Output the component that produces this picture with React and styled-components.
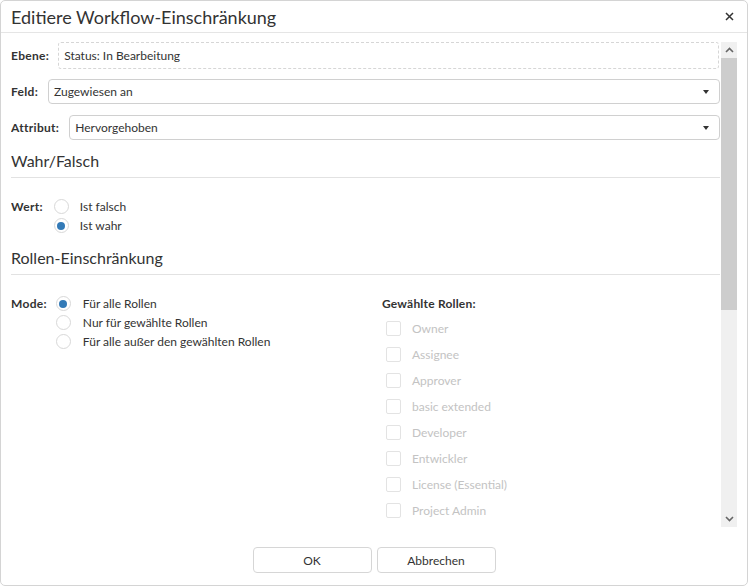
import styled, { createGlobalStyle } from 'styled-components'

const roles = [
  'Owner',
  'Assignee',
  'Approver',
  'basic extended',
  'Developer',
  'Entwickler',
  'License (Essential)',
  'Project Admin'
]

const GlobalStyle = createGlobalStyle`
  html, body {
    margin: 0;
    padding: 0;
    background: #fff;
  }
  body {
    font-family: 'Segoe UI', Lato, 'Open Sans', sans-serif;
    font-size: 12px;
    color: #333;
  }
  * { box-sizing: border-box; }
`

const Dialog = styled.div`
  width: 748px;
  height: 586px;
  border: 1px solid #d4d4d4;
  border-radius: 5px;
  display: flex;
  flex-direction: column;
  overflow: hidden;
`

const Header = styled.div`
  height: 32px;
  flex: none;
  border-bottom: 1px solid #e5e5e5;
  display: flex;
  align-items: center;
  justify-content: space-between;
  padding: 0 12px 0 10px;
`

const Title = styled.h1`
  margin: 0;
  font-size: 18px;
  font-weight: 400;
  color: #333;
`

const Close = styled.button`
  border: 0;
  background: none;
  padding: 0;
  width: 12px;
  height: 12px;
  display: flex;
  align-items: center;
  justify-content: center;
  cursor: pointer;
`

const Body = styled.div`
  flex: 1;
  display: flex;
  padding: 9px 10px 0 10px;
  min-height: 0;
`

const Content = styled.div`
  flex: 1;
  overflow: hidden;
  padding-right: 1px;
`

const FieldRow = styled.div`
  display: flex;
  align-items: center;
  gap: 10px;
  margin-bottom: ${p => p.$gap || 0}px;
`

const Label = styled.span`
  font-weight: 700;
  color: #333;
  letter-spacing: 0.3px;
  white-space: nowrap;
`

const StaticBox = styled.div`
  flex: 1;
  height: 27px;
  border: 1px dashed #d6d6d6;
  border-radius: 3px;
  display: flex;
  align-items: center;
  padding-left: 5px;
  margin-left: -1px;
  margin-right: 1px;
`

const Select = styled.div`
  flex: 1;
  height: 25px;
  border: 1px solid #d0d0d0;
  border-radius: 4px;
  display: flex;
  align-items: center;
  justify-content: space-between;
  padding: 0 10px 0 5px;
`

const Caret = styled.span`
  width: 0;
  height: 0;
  border-left: 3px solid transparent;
  border-right: 3px solid transparent;
  border-top: 4px solid #333;
`

const Section = styled.h2`
  margin: ${p => p.$top}px 0 0 0;
  font-size: 16px;
  font-weight: 400;
  line-height: 20px;
  color: #333;
  padding-bottom: 6px;
  border-bottom: 1px solid #e2e2e2;
`

const OptionRow = styled.div`
  display: flex;
  align-items: flex-start;
  margin-top: 21px;
`

const RadioList = styled.div`
  display: flex;
  flex-direction: column;
  gap: 4px;
  margin-left: ${p => p.$indent}px;
`

const RadioItem = styled.label`
  display: flex;
  align-items: center;
  gap: ${p => p.$gap || 10}px;
  height: 15px;
  line-height: 15px;
`

const Radio = styled.span`
  width: 15px;
  height: 15px;
  border-radius: 50%;
  border: 1px solid #d8d8d8;
  background: #fff;
  display: flex;
  align-items: center;
  justify-content: center;
  flex: none;

  &::after {
    content: '';
    width: 8px;
    height: 8px;
    border-radius: 50%;
    background: ${p => (p.$checked ? '#337ab7' : 'transparent')};
  }
`

const Columns = styled.div`
  display: grid;
  grid-template-columns: 371px 1fr;
  margin-top: 21px;
`

const ModeGroup = styled.div`
  display: flex;
  align-items: flex-start;
`

const RoleHeading = styled.div`
  font-weight: 700;
  height: 15px;
  line-height: 15px;
  letter-spacing: 0.2px;
  margin-bottom: 10px;
`

const RoleList = styled.div`
  display: flex;
  flex-direction: column;
  gap: 11px;
  padding-left: 4px;
`

const RoleItem = styled.label`
  display: flex;
  align-items: center;
  gap: 11px;
  height: 15px;
  color: #c3c3c3;
  font-size: 12px;
`

const Check = styled.span`
  width: 15px;
  height: 15px;
  border: 1px solid #e3e3e3;
  border-radius: 2px;
  flex: none;
`

const Scrollbar = styled.div`
  width: 16px;
  flex: none;
  background: #f0f0f0;
  display: flex;
  flex-direction: column;
`

const ScrollArrow = styled.div`
  height: 16px;
  display: flex;
  align-items: center;
  justify-content: center;
  flex: none;
`

const Thumb = styled.div`
  height: 252px;
  background: #cdcdcd;
  flex: none;
`

const Track = styled.div`
  flex: 1;
`

const Footer = styled.div`
  height: 58px;
  flex: none;
  display: flex;
  justify-content: center;
  gap: 5px;
  padding-top: 20px;
`

const Button = styled.button`
  width: 119px;
  height: 26px;
  border: 1px solid #d6d6d6;
  border-radius: 4px;
  background: #fff;
  font-family: inherit;
  font-size: 12px;
  color: #333;
  cursor: pointer;
`

function Chevron({ up }) {
  return (
    <svg width='9' height='6' viewBox='0 0 9 6'>
      <path
        d={up ? 'M1 5 L4.5 1.5 L8 5' : 'M1 1 L4.5 4.5 L8 1'}
        fill='none'
        stroke='#666'
        strokeWidth='1.6'
      />
    </svg>
  )
}

function App() {
  return (
    <>
      <GlobalStyle />
      <Dialog>
        <Header>
          <Title>Editiere Workflow-Einschränkung</Title>
          <Close aria-label='Schließen'>
            <svg width='9' height='9' viewBox='0 0 9 9'>
              <path d='M1 1 L8 8 M8 1 L1 8' stroke='#333' strokeWidth='1.5' />
            </svg>
          </Close>
        </Header>
        <Body>
          <Content>
            <FieldRow $gap={10}>
              <Label>Ebene:</Label>
              <StaticBox>Status: In Bearbeitung</StaticBox>
            </FieldRow>
            <FieldRow $gap={11}>
              <Label>Feld:</Label>
              <Select>
                Zugewiesen an <Caret />
              </Select>
            </FieldRow>
            <FieldRow>
              <Label>Attribut:</Label>
              <Select>
                Hervorgehoben <Caret />
              </Select>
            </FieldRow>

            <Section $top={11}>Wahr/Falsch</Section>
            <OptionRow>
              <Label>Wert:</Label>
              <RadioList $indent={11}>
                <RadioItem $gap={11}>
                  <Radio />
                  Ist falsch
                </RadioItem>
                <RadioItem $gap={11}>
                  <Radio $checked />
                  Ist wahr
                </RadioItem>
              </RadioList>
            </OptionRow>

            <Section $top={15}>Rollen-Einschränkung</Section>
            <Columns>
              <ModeGroup>
                <Label>Mode:</Label>
                <RadioList $indent={9}>
                  <RadioItem $gap={12}>
                    <Radio $checked />
                    Für alle Rollen
                  </RadioItem>
                  <RadioItem $gap={12}>
                    <Radio />
                    Nur für gewählte Rollen
                  </RadioItem>
                  <RadioItem $gap={12}>
                    <Radio />
                    Für alle außer den gewählten Rollen
                  </RadioItem>
                </RadioList>
              </ModeGroup>
              <div>
                <RoleHeading>Gewählte Rollen:</RoleHeading>
                <RoleList>
                  {roles.map(r => (
                    <RoleItem key={r}>
                      <Check />
                      {r}
                    </RoleItem>
                  ))}
                </RoleList>
              </div>
            </Columns>
          </Content>
          <Scrollbar>
            <ScrollArrow>
              <Chevron up />
            </ScrollArrow>
            <Thumb />
            <Track />
            <ScrollArrow>
              <Chevron />
            </ScrollArrow>
          </Scrollbar>
        </Body>
        <Footer>
          <Button>OK</Button>
          <Button>Abbrechen</Button>
        </Footer>
      </Dialog>
    </>
  )
}

export default App
